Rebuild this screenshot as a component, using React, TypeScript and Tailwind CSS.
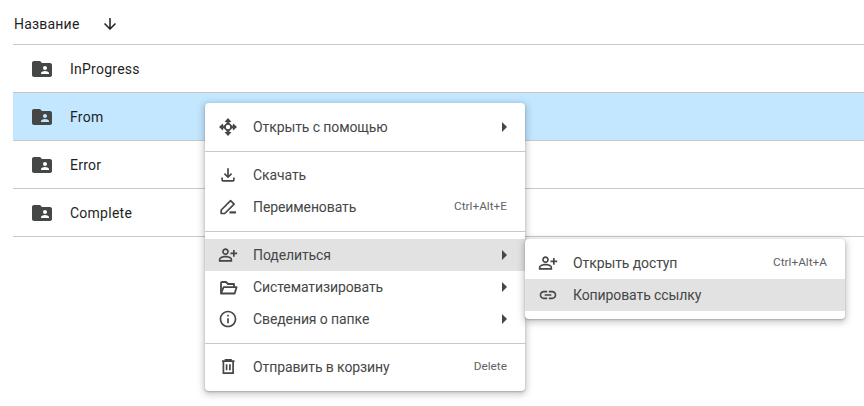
import type { ReactNode } from "react";
import {
  MdArrowDownward,
  MdFolderShared,
  MdInfoOutline,
  MdLink,
  MdOutlineFileDownload,
  MdOutlinePersonAddAlt,
} from "react-icons/md";

const folders = ["InProgress", "From", "Error", "Complete"];

function MoveIcon() {
  return (
    <svg width="20" height="20" viewBox="0 0 20 20" fill="currentColor">
      <path d="M10 1 13.4 4.8 10 5.8 6.6 4.8zM10 19 6.6 15.2 10 14.2 13.4 15.2zM1 10 4.8 6.6 5.8 10 4.8 13.4zM19 10 15.2 13.4 14.2 10 15.2 6.6z" />
      <path
        fillRule="evenodd"
        d="M10 4.6 15.4 10 10 15.4 4.6 10zM10 7.8A2.2 2.2 0 1 0 10 12.2 2.2 2.2 0 1 0 10 7.8z"
      />
    </svg>
  );
}

function RenameIcon() {
  return (
    <svg width="20" height="20" viewBox="0 0 20 20" fill="none" stroke="currentColor" strokeWidth="1.7">
      <path d="M3.2 16.5V13L12.6 3.6 16.1 7.1 6.7 16.5z" strokeLinejoin="round" />
      <path d="M11.5 15.4H18" strokeWidth="2.2" />
    </svg>
  );
}

function OpenFolderIcon() {
  return (
    <svg width="20" height="20" viewBox="0 0 20 20" fill="none" stroke="currentColor" strokeWidth="1.8">
      <path d="M3 16.5V6.2Q3 5 4.2 5H8l2 2h6v3" strokeLinejoin="round" />
      <path d="M5.6 10.2H18.6L16.6 16.5H3z" strokeLinejoin="round" />
    </svg>
  );
}

function TrashIcon() {
  return (
    <svg width="20" height="20" viewBox="0 0 20 20" fill="none" stroke="currentColor" strokeWidth="1.7">
      <path d="M4 4.2h12.5M7.5 4V2.9h5.5V4" />
      <path d="M5.4 4.2V16.2h9.7V4.2" />
      <path d="M8.6 7.2v6M11.9 7.2v6" />
    </svg>
  );
}

function Row({
  icon,
  label,
  hint,
  submenu,
  active,
}: {
  icon: ReactNode;
  label: string;
  hint?: string;
  submenu?: boolean;
  active?: boolean;
}) {
  return (
    <div className={`flex h-8 items-center pl-[13px] pr-[18px] ${active ? "bg-[#e2e2e2]" : ""}`}>
      <span className="flex w-[35px] shrink-0 items-center text-[#444746]">{icon}</span>
      <span className="flex-1 text-[14px] tracking-[-0.1px] text-[#444746]">{label}</span>
      {hint && <span className="text-[11.8px] text-[#5f6368]">{hint}</span>}
      {submenu && <span className="h-0 w-0 border-y-[5px] border-l-[5px] border-y-transparent border-l-[#444746]" />}
    </div>
  );
}

function Divider() {
  return <div className="mb-[7px] mt-2 h-px bg-[#c7c7c7]" />;
}

export default function App() {
  return (
    <div className="relative h-[406px] w-[864px] overflow-hidden bg-white font-['Roboto',sans-serif]">
      <div className="ml-[13px]">
        <div className="flex h-[45px] items-center border-b border-[#c7c7c7] pl-px pt-[4px]">
          <span className="text-[14px] tracking-[0.2px] text-[#1f1f1f]">Название</span>
          <MdArrowDownward size={18} className="ml-[21px] text-[#1f1f1f]" />
        </div>
        {folders.map((name) => (
          <div
            key={name}
            className={`flex h-12 items-center border-b border-[#c7c7c7] pl-[17px] ${name === "From" ? "bg-[#c2e7ff]" : ""}`}
          >
            <MdFolderShared size={24} className="text-[#444746]" />
            <span className="ml-[16px] pt-0.5 text-[14px] tracking-[0.25px] text-[#1f1f1f]">{name}</span>
          </div>
        ))}
      </div>

      {/* Context menu */}
      <div className="absolute left-[205px] top-[103px] w-[320px] rounded bg-white py-2 shadow-[0_2px_6px_2px_rgba(60,64,67,0.25),0_1px_2px_rgba(60,64,67,0.3)]">
        <Row icon={<MoveIcon />} label="Открыть с помощью" submenu />
        <Divider />
        <Row icon={<MdOutlineFileDownload size={20} />} label="Скачать" />
        <Row icon={<RenameIcon />} label="Переименовать" hint="Ctrl+Alt+E" />
        <Divider />
        <Row icon={<MdOutlinePersonAddAlt size={20} />} label="Поделиться" submenu active />
        <Row icon={<OpenFolderIcon />} label="Систематизировать" submenu />
        <Row icon={<MdInfoOutline size={20} />} label="Сведения о папке" submenu />
        <Divider />
        <Row icon={<TrashIcon />} label="Отправить в корзину" hint="Delete" />
      </div>

      {/* Share submenu */}
      <div className="absolute left-[525px] top-[239px] w-[320px] rounded bg-white py-2 shadow-[0_2px_6px_2px_rgba(60,64,67,0.25),0_1px_2px_rgba(60,64,67,0.3)]">
        <Row icon={<MdOutlinePersonAddAlt size={20} />} label="Открыть доступ" hint="Ctrl+Alt+A" />
        <Row icon={<MdLink size={20} />} label="Копировать ссылку" active />
      </div>
    </div>
  );
}
